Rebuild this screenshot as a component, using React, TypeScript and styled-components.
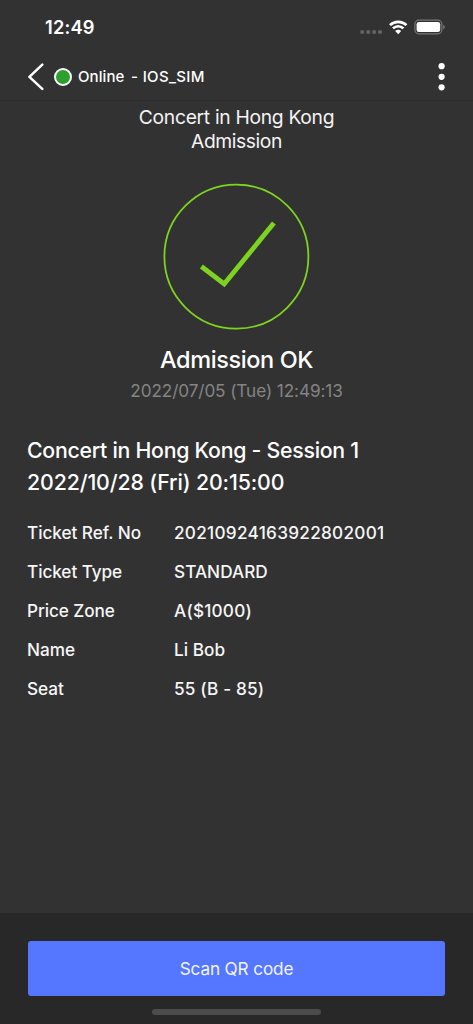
import React from "react";
import styled, { createGlobalStyle } from "styled-components";

const GlobalStyle = createGlobalStyle`
  * { box-sizing: border-box; }
  body { margin: 0; background: #323232; }
`;

const Screen = styled.div`
  width: 473px;
  height: 1024px;
  display: flex;
  flex-direction: column;
  background: #323232;
  color: #fff;
  font-family: Inter, "Liberation Sans", sans-serif;
  overflow: hidden;
`;

const StatusBar = styled.div`
  height: 52px;
  flex: none;
  display: flex;
  justify-content: space-between;
  padding: 0 28px 0 45px;
`;

const Clock = styled.div`
  margin-top: 16px;
  font-size: 18.3px;
  line-height: 23px;
  font-weight: 580;
  letter-spacing: 0.15px;
`;

const StatusIcons = styled.svg`
  width: 86px;
  height: 20px;
  margin-top: 17px;
`;

const NavBar = styled.header`
  height: 49px;
  flex: none;
  display: flex;
  align-items: center;
  padding: 2px 25px 0 27px;
  border-bottom: 1px solid #2d2d2d;
`;

const BackIcon = styled.svg`
  width: 18px;
  height: 28px;
  flex: none;
`;

const OnlineDot = styled.span`
  width: 18px;
  height: 18px;
  margin-left: 9px;
  flex: none;
  border: 2px solid #fff;
  border-radius: 50%;
  background: #2ca02c;
`;

const NavText = styled.span<{ $gap: number; $track?: number }>`
  margin-left: ${(p) => p.$gap}px;
  font-size: 15px;
  line-height: 20px;
  font-weight: 450;
  letter-spacing: ${(p) => p.$track ?? 0}px;
  white-space: nowrap;
`;

const MoreIcon = styled.svg`
  width: 12px;
  height: 30px;
  margin-left: auto;
`;

const Main = styled.main`
  flex: 1;
  display: flex;
  flex-direction: column;
  padding: 5px 27px 0;
`;

const EventTitle = styled.h1`
  margin: 0;
  text-align: center;
  font-size: 19.3px;
  line-height: 23.5px;
  font-weight: 400;
  color: #f4f4f4;
`;

const TitleLine = styled.span<{ $track: number }>`
  display: block;
  letter-spacing: ${(p) => p.$track}px;
`;

const ResultIcon = styled.svg`
  display: block;
  width: 148px;
  height: 148px;
  margin: 30px auto 0;
`;

const ResultText = styled.div`
  margin-top: 14px;
  text-align: center;
  font-size: 23.5px;
  line-height: 30px;
  font-weight: 480;
  letter-spacing: -0.4px;
`;

const ScanTime = styled.div`
  margin-top: 4px;
  text-align: center;
  font-size: 17.2px;
  line-height: 24px;
  letter-spacing: -0.1px;
  color: #848484;
`;

const Session = styled.h2`
  margin: 31px 0 0;
  font-size: 21.3px;
  line-height: 32px;
  font-weight: 450;
`;

const Details = styled.dl`
  margin: 15px 0 0;
  display: grid;
  grid-template-columns: 147px 1fr;
  grid-auto-rows: 39px;
  align-items: center;
  font-size: 17.2px;
  font-weight: 450;
  color: #f6f6f6;
`;

const Label = styled.dt<{ $track: number }>`
  letter-spacing: ${(p) => p.$track}px;
`;

const Value = styled.dd<{ $track: number }>`
  margin: 0;
  letter-spacing: ${(p) => p.$track}px;
`;

const Footer = styled.footer`
  height: 111px;
  flex: none;
  display: flex;
  flex-direction: column;
  align-items: center;
  padding: 28px 28px 0;
  background: #282828;
`;

const ScanButton = styled.button`
  width: 417px;
  height: 55px;
  flex: none;
  padding: 0;
  border: 0;
  border-radius: 3px;
  background: #5576ff;
  color: #f1f4ff;
  font-family: inherit;
  font-size: 17.2px;
  font-weight: 400;
  letter-spacing: -0.15px;
`;

const HomeIndicator = styled.div`
  width: 169px;
  height: 6px;
  margin-top: 13px;
  border-radius: 3px;
  background: #4c4c4c;
`;

const details = [
  { label: "Ticket Ref. No", value: "20210924163922802001", lt: -0.05, vt: 0.27 },
  { label: "Ticket Type", value: "STANDARD", lt: -0.08, vt: 0.03 },
  { label: "Price Zone", value: "A($1000)", lt: -0.08, vt: 0.2 },
  { label: "Name", value: "Li Bob", lt: 0, vt: 0.05 },
  { label: "Seat", value: "55 (B - 85)", lt: -0.05, vt: 0.17 },
];

export default function App() {
  return (
    <>
      <GlobalStyle />
      <Screen>
        <StatusBar>
          <Clock>12:49</Clock>
          <StatusIcons viewBox="359 17 86 20">
            <g fill="#646464">
              <circle cx="362.2" cy="32" r="2.1" />
              <circle cx="368.2" cy="32" r="2.1" />
              <circle cx="374.1" cy="32" r="2.1" />
              <circle cx="380" cy="32" r="2.1" />
            </g>
            <g fill="none" stroke="#fff" strokeWidth="2.7">
              <path d="M390 25.1a11.8 11.8 0 0 1 16.4 0" />
              <path d="M393 28.4a7.4 7.4 0 0 1 10.4 0" />
            </g>
            <path d="M395.2 31.1a4.2 4.2 0 0 1 6 0l-3 3.1z" fill="#fff" />
            <rect x="414.9" y="20.2" width="27" height="13.6" rx="4" fill="none" stroke="#777" strokeWidth="1.2" />
            <rect x="416.6" y="21.9" width="23.6" height="10.2" rx="2.4" fill="#fff" />
            <path d="M443.2 24.8c2.2 1 2.2 3.5 0 4.4z" fill="#777" />
          </StatusIcons>
        </StatusBar>
        <NavBar>
          <BackIcon viewBox="0 0 18 28">
            <path d="M15.3 1.6 2.4 13.8l12.9 12" fill="none" stroke="#fff" strokeWidth="2.5" strokeLinecap="round" strokeLinejoin="round" />
          </BackIcon>
          <OnlineDot />
          <NavText $gap={6} $track={0.1}>Online</NavText>
          <NavText $gap={6.5} $track={0.35}>- IOS_SIM</NavText>
          <MoreIcon viewBox="0 0 12 30" fill="#fff">
            <circle cx="5.6" cy="4.2" r="3.1" />
            <circle cx="5.6" cy="14.8" r="3.1" />
            <circle cx="5.6" cy="25.3" r="3.1" />
          </MoreIcon>
        </NavBar>
        <Main>
          <EventTitle>
            <TitleLine $track={-0.31}>Concert in Hong Kong</TitleLine>
            <TitleLine $track={-0.42}>Admission</TitleLine>
          </EventTitle>
          <ResultIcon viewBox="0.6 0 148 148" fill="none" stroke="#7ed321">
            <circle cx="74" cy="73.6" r="72" strokeWidth="1.8" />
            <path d="M39 83.5 61.8 101 111.5 40" strokeWidth="4.8" />
          </ResultIcon>
          <ResultText>Admission OK</ResultText>
          <ScanTime>2022/07/05 (Tue) 12:49:13</ScanTime>
          <Session>
            <TitleLine $track={-0.27}>Concert in Hong Kong - Session 1</TitleLine>
            <TitleLine $track={-0.12}>2022/10/28 (Fri) 20:15:00</TitleLine>
          </Session>
          <Details>
            {details.map((d) => (
              <React.Fragment key={d.label}>
                <Label $track={d.lt}>{d.label}</Label>
                <Value $track={d.vt}>{d.value}</Value>
              </React.Fragment>
            ))}
          </Details>
        </Main>
        <Footer>
          <ScanButton>Scan QR code</ScanButton>
          <HomeIndicator />
        </Footer>
      </Screen>
    </>
  );
}
